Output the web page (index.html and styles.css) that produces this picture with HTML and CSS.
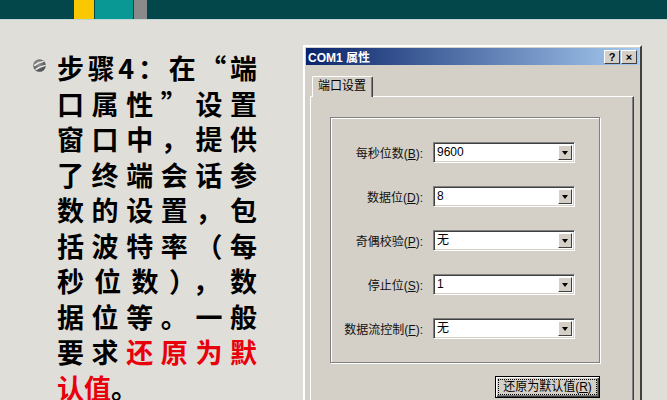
FILE: index.html
```html
<!DOCTYPE html>
<html lang="zh-CN">
<head>
    <meta charset="UTF-8">
    <meta name="viewport" content="width=device-width, initial-scale=1.0">
    <title>步骤4：端口属性</title>
    <link rel="stylesheet" href="styles.css">
</head>
<body>
    <div class="topbar">
        <span class="blk yellow"></span>
        <span class="blk teal"></span>
        <span class="blk grey"></span>
    </div>
    <div class="slide">
        <div class="point">
            <svg class="bullet" viewBox="0 0 13 13">
                <defs>
                    <radialGradient id="ball" cx="40%" cy="35%" r="70%">
                        <stop offset="0" stop-color="#9c9c9c"/>
                        <stop offset="1" stop-color="#444"/>
                    </radialGradient>
                </defs>
                <circle cx="6.5" cy="6.5" r="6.3" fill="url(#ball)"/>
                <path d="M1.2 6.6 Q5 3.4 10.6 2.4" stroke="#f2f2f2" stroke-width="1.4" fill="none"/>
                <path d="M2.6 10.6 Q7 7.2 12.6 6.4" stroke="#f2f2f2" stroke-width="1.4" fill="none"/>
            </svg>
            <div class="lines">
                <div class="ln">步骤4：在“端</div>
                <div class="ln">口属性”设置</div>
                <div class="ln">窗口中，提供</div>
                <div class="ln">了终端会话参</div>
                <div class="ln">数的设置，包</div>
                <div class="ln">括波特率（每</div>
                <div class="ln">秒位数），数</div>
                <div class="ln">据位等。一般</div>
                <div class="ln">要求<span class="red">还原为默</span></div>
                <div class="ln last"><span class="red">认值</span>。</div>
            </div>
        </div>

        <div class="dialog">
            <div class="titlebar">
                <span class="title">COM1 属性</span>
                <span class="tbtns">
                    <span class="tbtn">?</span>
                    <span class="tbtn">×</span>
                </span>
            </div>
            <div class="tabs">
                <span class="tab">端口设置</span>
            </div>
            <div class="panel">
                <div class="group">
                    <div class="row">
                        <label>每秒位数(<u>B</u>):</label>
                        <div class="combo"><span class="val">9600</span><span class="drop"></span></div>
                    </div>
                    <div class="row">
                        <label>数据位(<u>D</u>):</label>
                        <div class="combo"><span class="val">8</span><span class="drop"></span></div>
                    </div>
                    <div class="row">
                        <label>奇偶校验(<u>P</u>):</label>
                        <div class="combo"><span class="val">无</span><span class="drop"></span></div>
                    </div>
                    <div class="row">
                        <label>停止位(<u>S</u>):</label>
                        <div class="combo"><span class="val">1</span><span class="drop"></span></div>
                    </div>
                    <div class="row">
                        <label>数据流控制(<u>F</u>):</label>
                        <div class="combo"><span class="val">无</span><span class="drop"></span></div>
                    </div>
                </div>
                <div class="actions">
                    <button class="btn"><span class="focus">还原为默认值(<u>R</u>)</span></button>
                </div>
            </div>
        </div>
    </div>
</body>
</html>
```

FILE: styles.css
```css
body {
    margin: 0;
    height: 400px;
    overflow: hidden;
    background-color: #dfded9;
    font-family: "Noto Sans CJK SC", sans-serif;
}
.topbar {
    display: flex;
    height: 19px;
    padding-left: 74px;
    background-color: #03474a;
    border-bottom: 1px solid #bfd6d5;
}
.blk {
    height: 19px;
}
.yellow {
    width: 20px;
    background-color: #f9c800;
}
.teal {
    width: 38px;
    margin-left: 1px;
    background-color: #0a9895;
}
.grey {
    width: 13px;
    margin-left: 1px;
    background-color: #8a8a8a;
}
.slide {
    display: flex;
}

/* left text */
.point {
    display: flex;
    width: 303px;
    padding: 30px 0 0 33px;
    box-sizing: border-box;
}
.bullet {
    flex: none;
    width: 13px;
    height: 13px;
    margin-top: 9px;
}
.lines {
    width: 200px;
    margin-left: 11px;
    font-size: 27px;
    font-weight: bold;
    line-height: 35.5px;
    color: #000;
}
.ln {
    text-align: justify;
    text-align-last: justify;
}
.ln.last {
    text-align-last: left;
}
.red {
    color: #e8000b;
}

/* dialog */
.dialog {
    width: 339px;
    height: 380px;
    margin-top: 25px;
    padding: 1px;
    box-sizing: border-box;
    background-color: #d4d0c8;
    border: 2px solid;
    border-color: #fff #404040 #404040 #fff;
    font-family: "Liberation Sans", "Noto Sans CJK SC", sans-serif;
    font-size: 12px;
    color: #000;
}
.titlebar {
    display: flex;
    align-items: center;
    justify-content: space-between;
    height: 17px;
    padding: 0 2px 0 2px;
    background: linear-gradient(to right, #0a246a, #a6caf0);
}
.title {
    color: #fff;
    font-weight: bold;
    font-size: 12px;
}
.tbtns {
    display: flex;
    gap: 1px;
}
.tbtn {
    width: 14px;
    height: 12px;
    line-height: 12px;
    text-align: center;
    font-weight: bold;
    font-size: 11px;
    background-color: #d4d0c8;
    border: 1px solid;
    border-color: #fff #404040 #404040 #fff;
}
.tabs {
    padding: 10px 0 0 6px;
    height: 21px;
    display: flex;
    align-items: flex-end;
}
.tab {
    padding: 1px 6px 2px 5px;
    line-height: 17px;
    background-color: #d4d0c8;
    border: 1px solid;
    border-bottom: none;
    border-color: #fff #404040 #fff #fff;
    border-radius: 2px 2px 0 0;
    box-shadow: inset -1px 0 0 #808080;
    position: relative;
    top: 1px;
}
.panel {
    margin: 0 5px 0 4px;
    height: 320px;
    padding: 20px 0 0 19px;
    border: 1px solid;
    border-bottom: none;
    border-color: #fff #404040 #fff #fff;
    box-shadow: inset -1px 0 0 #808080;
}
.group {
    width: 270px;
    box-sizing: border-box;
    padding: 24px 0 23px 0;
    display: flex;
    flex-direction: column;
    gap: 23px;
    border: 1px solid #808080;
    box-shadow: inset 1px 1px 0 #fff, 1px 1px 0 #fff;
}
.row {
    display: grid;
    grid-template-columns: 92px 142px;
    column-gap: 10px;
    align-items: center;
}
.row label {
    text-align: right;
    white-space: nowrap;
    color: #111;
}
.combo {
    display: flex;
    height: 21px;
    box-sizing: border-box;
    background-color: #fff;
    border: 1px solid;
    border-color: #808080 #fff #fff #808080;
    box-shadow: inset 1px 1px 0 #404040, inset -1px -1px 0 #d4d0c8;
    padding: 2px 2px 2px 3px;
}
.val {
    flex: 1;
    line-height: 15px;
}
.drop {
    width: 14px;
    height: 15px;
    box-sizing: border-box;
    background-color: #d4d0c8;
    border: 1px solid;
    border-color: #fff #404040 #404040 #fff;
    position: relative;
}
.drop::after {
    content: "";
    position: absolute;
    left: 3px;
    top: 5px;
    border-left: 3.5px solid transparent;
    border-right: 3.5px solid transparent;
    border-top: 4px solid #000;
}
.actions {
    width: 270px;
    display: flex;
    justify-content: flex-end;
    margin-top: 13px;
}
.btn {
    width: 105px;
    height: 22px;
    padding: 2px;
    background-color: #d4d0c8;
    border: 1px solid #000;
    box-shadow: inset 1px 1px 0 #fff, inset -1px -1px 0 #404040, inset -2px -2px 0 #808080;
    font-family: "Liberation Sans", "Noto Sans CJK SC", sans-serif;
    font-size: 12px;
    color: #000;
}
.focus {
    display: block;
    line-height: 14px;
    border: 1px dotted #000;
}
```
